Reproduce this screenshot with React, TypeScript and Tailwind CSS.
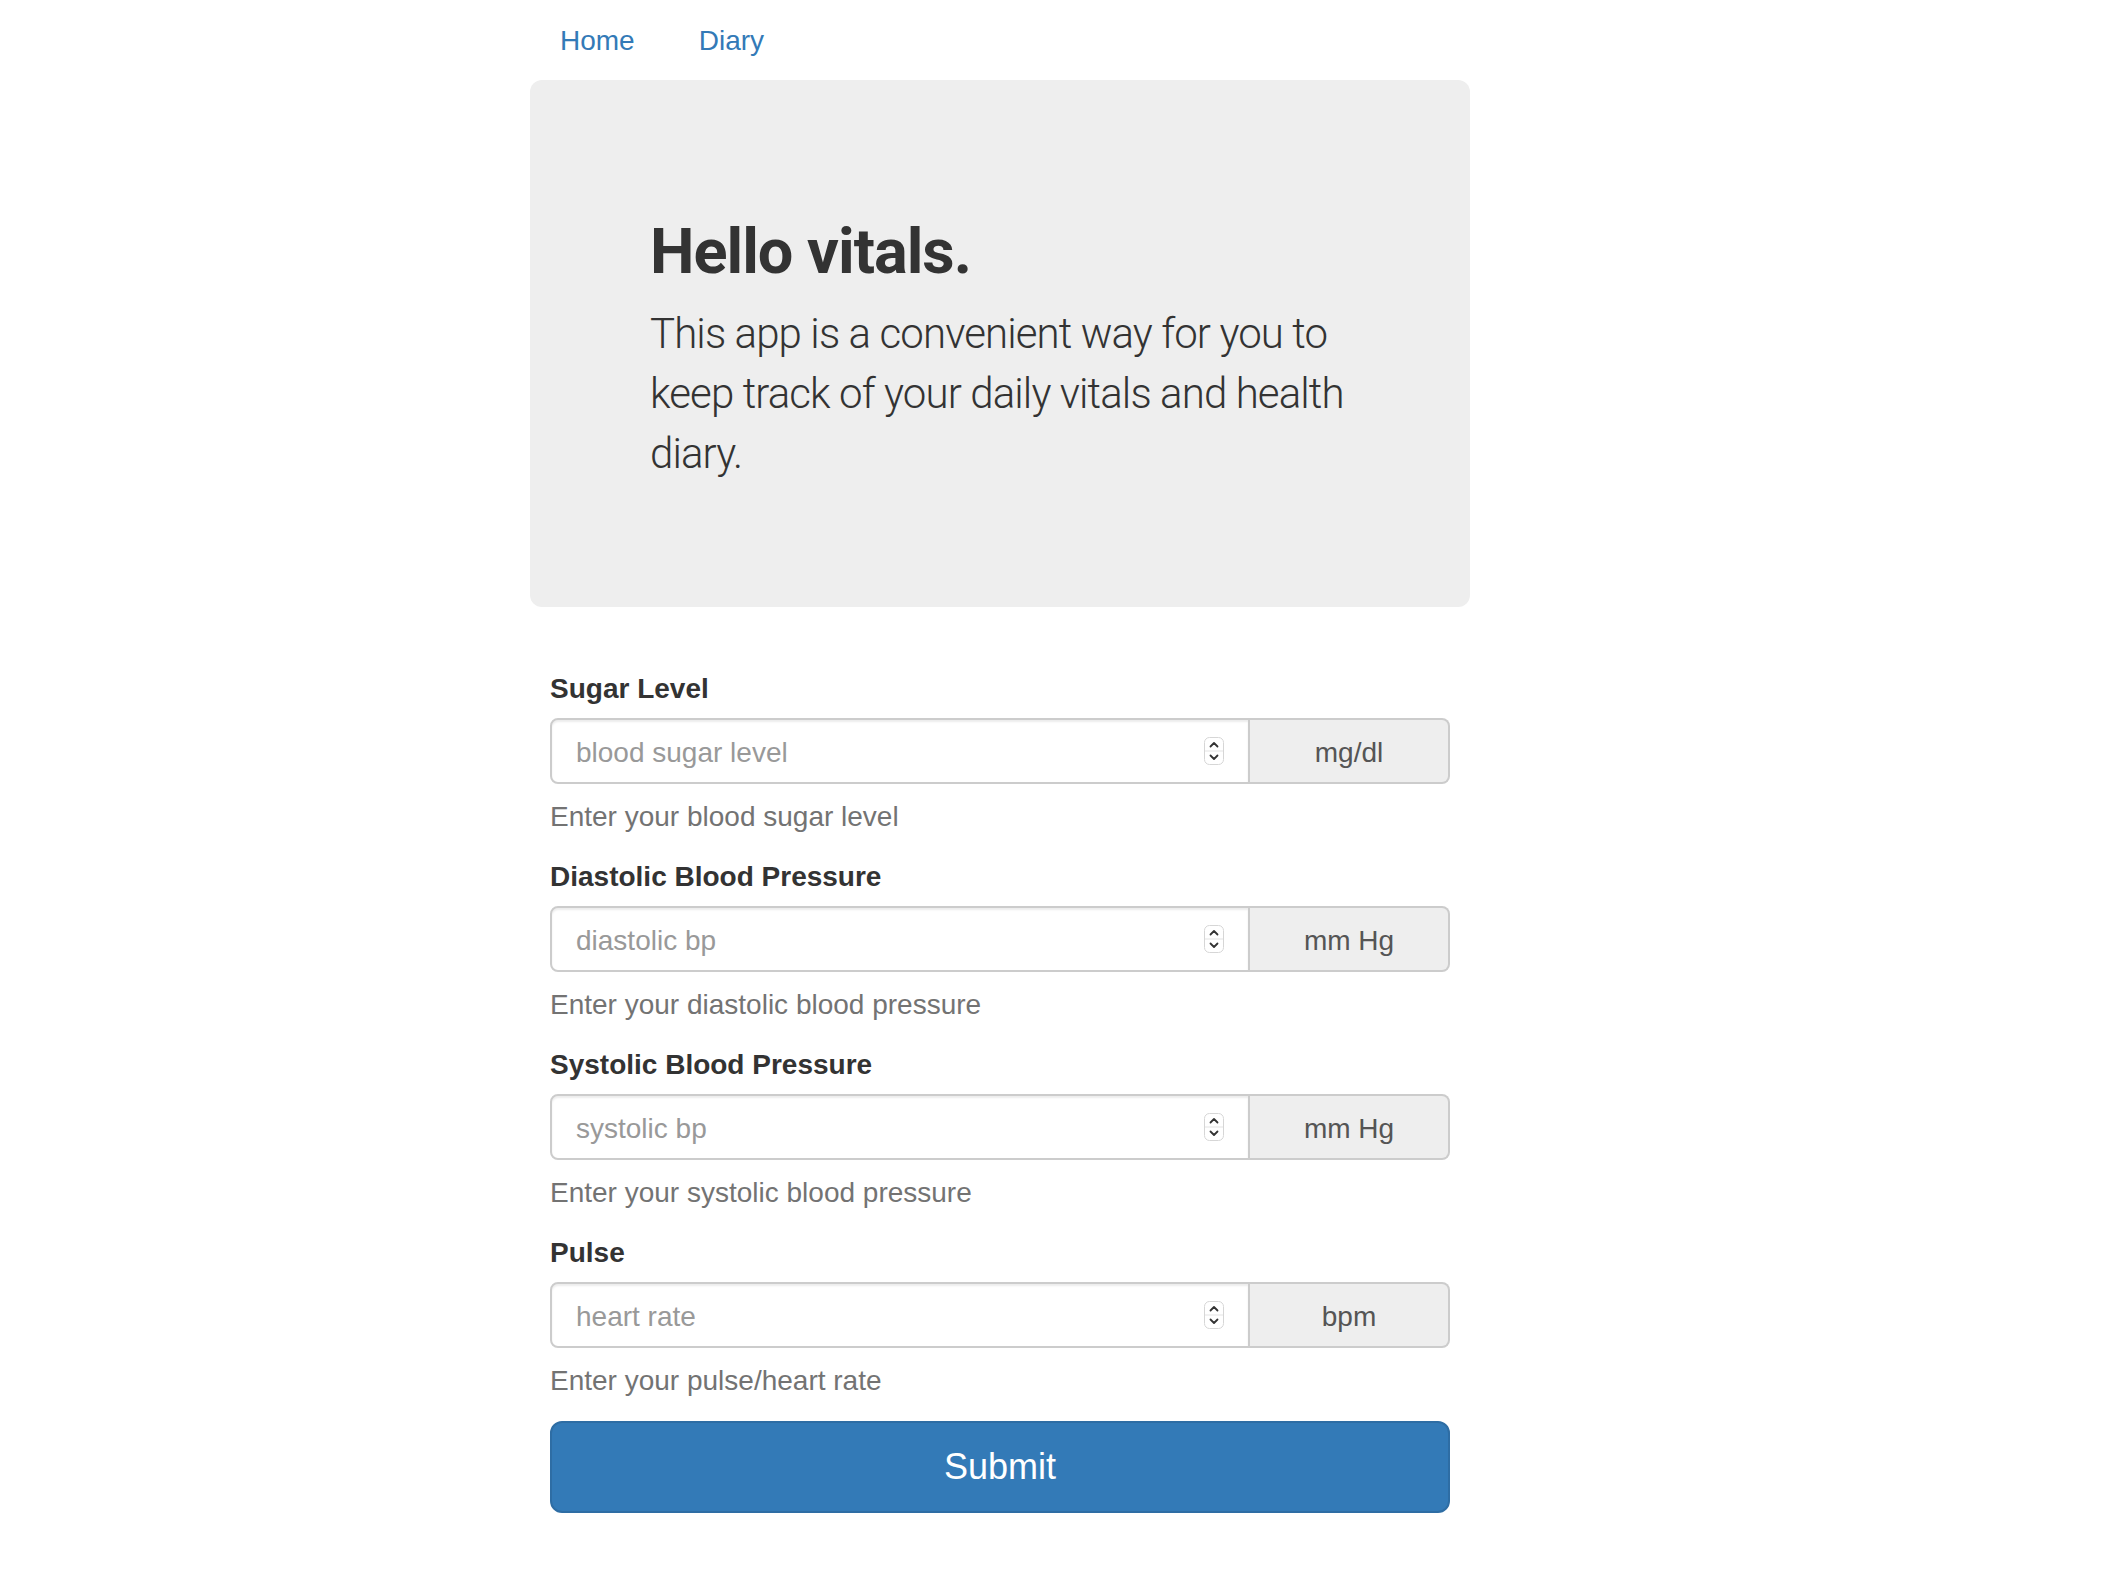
import React from "react"

interface Vital {
  id: string
  label: string
  placeholder: string
  unit: string
  help: string
}

const vitals: Vital[] = [
  { id: "sugar", label: "Sugar Level", placeholder: "blood sugar level", unit: "mg/dl", help: "Enter your blood sugar level" },
  { id: "diastolic", label: "Diastolic Blood Pressure", placeholder: "diastolic bp", unit: "mm Hg", help: "Enter your diastolic blood pressure" },
  { id: "systolic", label: "Systolic Blood Pressure", placeholder: "systolic bp", unit: "mm Hg", help: "Enter your systolic blood pressure" },
  { id: "pulse", label: "Pulse", placeholder: "heart rate", unit: "bpm", help: "Enter your pulse/heart rate" },
]

// little native-looking number spinner
function Spinner() {
  return (
    <svg width="20" height="28" viewBox="0 0 20 28" className="shrink-0">
      <rect x="0.5" y="0.5" width="19" height="27" rx="5" fill="#fff" stroke="#d6d6d6" />
      <line x1="1" y1="14" x2="19" y2="14" stroke="#e3e3e3" />
      <path d="M6.5 9.5 L10 6 L13.5 9.5" fill="none" stroke="#333" strokeWidth="1.8" strokeLinecap="round" strokeLinejoin="round" />
      <path d="M6.5 18.5 L10 22 L13.5 18.5" fill="none" stroke="#333" strokeWidth="1.8" strokeLinecap="round" strokeLinejoin="round" />
    </svg>
  )
}

export default function App() {
  return (
    <div className="min-h-[1590px] bg-white pl-[530px] text-[28px] leading-[40px] text-[#333]" style={{ fontFamily: '"Liberation Sans", Arial, sans-serif' }}>
      <div className="w-[940px]">
        {/* nav pills */}
        <ul className="flex h-[80px] pt-[1px]">
          <li>
            <a href="#" className="block px-[30px] py-[20px] text-[#337ab7]">Home</a>
          </li>
          <li className="ml-[4px]">
            <a href="#" className="block px-[30px] py-[20px] text-[#337ab7]">Diary</a>
          </li>
        </ul>

        {/* jumbotron */}
        <div className="h-[527px] rounded-[12px] bg-[#eee] pl-[120px] pt-[137px]" style={{ fontFamily: "Roboto, 'Liberation Sans', sans-serif" }}>
          <h1 className="mb-[18px] text-[63px] font-bold leading-[69px] tracking-[-1px] text-[#333]">Hello vitals.</h1>
          <p className="w-[700px] text-[42px] font-light leading-[60px] tracking-[-0.9px] text-[#333]">
            This app is a convenient way for you to keep track of your daily vitals and health diary.
          </p>
        </div>

        {/* form */}
        <form className="mt-[62px] px-[20px]" onSubmit={(e) => e.preventDefault()}>
          {vitals.map((v) => (
            <div key={v.id} className="mb-[20px] last:mb-[17px]">
              <label htmlFor={v.id} className="mb-[9px] block font-bold">{v.label}</label>
              <div className="flex h-[66px]">
                <div className="flex flex-1 items-center rounded-l-[8px] border-2 border-[#ccc] bg-white px-[24px] shadow-[inset_0_2px_2px_rgba(0,0,0,0.075)]">
                  <input
                    id={v.id}
                    type="text"
                    placeholder={v.placeholder}
                    className="min-w-0 flex-1 bg-transparent pt-[3px] text-[28px] text-[#555] outline-none placeholder:text-[#999]"
                  />
                  <Spinner />
                </div>
                <span className="flex w-[200px] items-center justify-center rounded-r-[8px] border-2 border-l-0 border-[#ccc] bg-[#eee] pt-[3px] text-[#555]">
                  {v.unit}
                </span>
              </div>
              <p className="mt-[13px] text-[#737373]">{v.help}</p>
            </div>
          ))}

          <button
            type="submit"
            className="h-[92px] w-full rounded-[12px] border-2 border-[#2e6da4] bg-[#337ab7] text-[36px] text-white"
          >
            Submit
          </button>
        </form>
      </div>
    </div>
  )
}
